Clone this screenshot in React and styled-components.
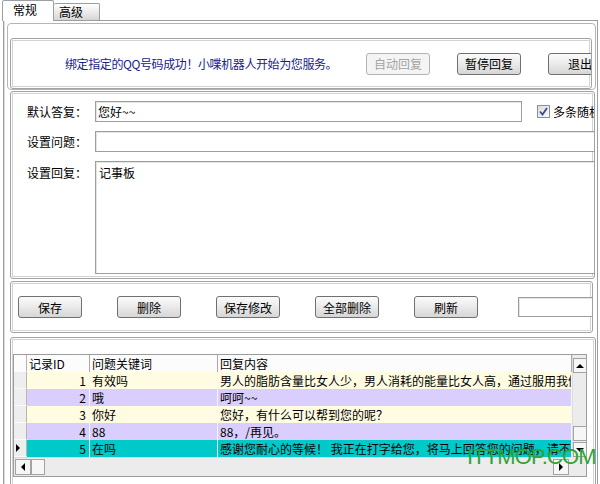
import React from "react";
import styled, { createGlobalStyle, css } from "styled-components";

const Global = createGlobalStyle`
  html, body { margin: 0; padding: 0; background: #fff; }
  body {
    font-family: "Noto Sans CJK SC", "Noto Sans", sans-serif;
    font-size: 12px;
    color: #000;
  }
  * { box-sizing: border-box; }
`;

const Root = styled.div`
  position: relative;
  width: 600px;
  height: 484px;
  overflow: hidden;
  background: #fff;
`;

const TabStrip = styled.div`
  position: relative;
  z-index: 1;
  display: flex;
  align-items: flex-end;
  height: 20px;
  padding-left: 2px;
`;

const Tab = styled.div`
  display: flex;
  align-items: center;
  border: 1px solid #9aa0a2;
  border-bottom: none;
  border-radius: 2px 2px 0 0;
  font-size: 12px;
  line-height: 1;
  ${(p) =>
    p.$active
      ? css`
          width: 52px;
          height: 21px;
          margin-bottom: -1px;
          background: #fff;
          padding: 0 0 3px 10px;
        `
      : css`
          width: 46px;
          height: 17px;
          border-left: none;
          background: linear-gradient(#ffffff, #d6d6d6);
          padding: 0 0 1px 5px;
        `}
`;

const TabPage = styled.div`
  width: 595px;
  height: 464px;
  margin-left: 3px;
  border: 1px solid #9aa0a2;
  border-bottom: none;
  box-shadow: inset 1px 0 0 #dcdcdc;
  padding: 2px 0 0 3px;
`;

const TopFrame = styled.div`
  width: 589px;
  height: 67px;
  border: 1px solid #b4b4b4;
  border-radius: 4px;
  padding: 14px 0 0 2px;
`;

const Group = styled.div`
  border: 1px solid #a2a2a2;
  border-radius: 3px;
  box-shadow: inset 0 0 0 1px #fff, inset 0 0 0 2px #d2d2d2;
  overflow: hidden;
  width: ${(p) => p.$w}px;
  height: ${(p) => p.$h}px;
  margin-top: ${(p) => p.$mt || 0}px;
  margin-left: ${(p) => p.$ml || 0}px;
`;

const StatusGroup = styled(Group)`
  display: flex;
  align-items: center;
  padding-left: 54px;
`;

const StatusText = styled.div`
  flex: none;
  width: 301px;
  color: #1c2088;
  font-size: 12px;
  letter-spacing: -0.4px;
  white-space: nowrap;
`;

const Button = styled.div`
  flex: none;
  width: 64px;
  height: 22px;
  display: flex;
  align-items: center;
  justify-content: center;
  font-size: 12px;
  border: 1px solid #707070;
  border-radius: 3px;
  background: linear-gradient(#fbfbfb 0%, #eaeaea 50%, #d6d6d6 100%);
  color: #000;
  margin-left: ${(p) => p.$ml || 0}px;
  ${(p) =>
    p.$disabled &&
    css`
      border-color: #b3b3b3;
      background: #f4f4f4;
      color: #a3a3a3;
    `}
`;

const FormGroup = styled(Group)`
  display: flex;
  flex-direction: column;
  gap: 9px;
  padding: 9px 0 0 16px;
`;

const FormRow = styled.div`
  display: flex;
  align-items: ${(p) => (p.$top ? "flex-start" : "center")};
  flex: none;
`;

const Label = styled.div`
  width: 68px;
  flex: none;
  white-space: nowrap;
  padding-top: ${(p) => (p.$top ? 3 : 0)}px;
`;

const Field = styled.div`
  flex: none;
  width: ${(p) => p.$w}px;
  height: ${(p) => p.$h || 21}px;
  border: 1px solid #9e9e9e;
  box-shadow: inset 1px 1px 0 #e4e4e4;
  background: #fff;
  padding: ${(p) => (p.$multi ? "2px 3px" : "0 2px")};
  display: flex;
  align-items: ${(p) => (p.$multi ? "flex-start" : "center")};
  white-space: nowrap;
  margin-left: ${(p) => p.$ml || 0}px;
`;

const CheckWrap = styled.div`
  display: flex;
  align-items: center;
  gap: 3px;
  margin-left: 15px;
  flex: none;
  white-space: nowrap;
  font-size: 12px;
`;

const CheckBox = styled.div`
  width: 13px;
  height: 13px;
  border: 1px solid #8e8f8f;
  background: linear-gradient(135deg, #dcdcdc, #fafafa);
  display: flex;
  align-items: center;
  justify-content: center;
`;

const ButtonGroup = styled(Group)`
  display: flex;
  align-items: center;
  gap: 35px;
  padding-left: 7px;
`;

const GridGroup = styled(Group)`
  padding: 16px 0 0 2px;
`;

const Grid = styled.div`
  width: 574px;
  height: 123px;
  border: 1px solid #9c9c9c;
  display: grid;
  grid-template-columns: 1fr 14px;
  grid-template-rows: 102px 18px;
  background: #ececec;
`;

const Body = styled.div`
  overflow: hidden;
  display: flex;
  flex-direction: column;
  background: #fff;
`;

const Row = styled.div`
  display: grid;
  grid-template-columns: 13px 63px 128px 1fr;
  height: 17px;
  flex: none;
`;

const rowBg = { odd: "#fffce2", even: "#d9cefd", sel: "#00c9c9", head: "#fcfcfc" };

const Cell = styled.div`
  height: 17px;
  line-height: 17px;
  white-space: nowrap;
  overflow: hidden;
  padding: 0 2px;
  font-size: 12px;
  background: ${(p) => rowBg[p.$kind]};
  border-right: 1px solid ${(p) => (p.$kind === "head" ? "#a9a9a9" : "#f6f6f6")};
  text-align: ${(p) => (p.$right ? "right" : "left")};
  padding-right: ${(p) => (p.$right ? 3 : 2)}px;
`;

const Indicator = styled.div`
  height: 17px;
  background: ${(p) => (p.$head ? "#fcfcfc" : "#eeeeee")};
  border-right: 1px solid #b5b5b5;
  border-bottom: 1px solid ${(p) => (p.$head ? "#fcfcfc" : "#fafafa")};
  display: flex;
  align-items: center;
  padding-left: 1px;
`;

const VScroll = styled.div`
  display: flex;
  flex-direction: column;
  background: #ececec;
  border-left: 1px solid #dcdcdc;
`;

const ScrollBtn = styled.div`
  flex: none;
  width: ${(p) => p.$w || 14}px;
  height: ${(p) => p.$h || 15}px;
  border: 1px solid #a3a3a3;
  background: #f6f6f6;
  display: flex;
  align-items: center;
  justify-content: center;
  margin-top: ${(p) => p.$mt || 0}px;
`;

const Spacer = styled.div`
  flex: 1;
`;

const HScroll = styled.div`
  display: flex;
  align-items: center;
  padding-left: 1px;
  background: #ececec;
  border-top: 1px solid #dcdcdc;
`;

const Corner = styled.div`
  background: #ececec;
`;

const Watermark = styled.div`
  position: absolute;
  left: 467px;
  top: 444px;
  font-family: "Liberation Sans", Arial, sans-serif;
  font-size: 22px;
  letter-spacing: -0.9px;
  color: #33a235;
  white-space: nowrap;
  pointer-events: none;
`;

const Tri = ({ dir }) => {
  const pts = {
    up: "0,5 4,1 8,5",
    down: "0,1 4,5 8,1",
    left: "5,0 1,4 5,8",
    right: "1,0 5,4 1,8",
  }[dir];
  const vertical = dir === "up" || dir === "down";
  return (
    <svg width={vertical ? 8 : 6} height={vertical ? 6 : 8} viewBox={vertical ? "0 0 8 6" : "0 0 6 8"}>
      <polygon points={pts} fill="#000" />
    </svg>
  );
};

const rows = [
  { id: 1, key: "有效吗", text: "男人的脂肪含量比女人少，男人消耗的能量比女人高，通过服用我们的产品", kind: "odd" },
  { id: 2, key: "哦", text: "呵呵~~", kind: "even" },
  { id: 3, key: "你好", text: "您好，有什么可以帮到您的呢？", kind: "odd" },
  { id: 4, key: "88", text: "88，/再见。", kind: "even" },
  { id: 5, key: "在吗", text: "感谢您耐心的等候！ 我正在打字给您，将马上回答您的问题，请不要走开。", kind: "sel" },
];

export default function App() {
  return (
    <Root>
      <Global />
      <TabStrip>
        <Tab $active>常规</Tab>
        <Tab>高级</Tab>
      </TabStrip>
      <TabPage>
        <TopFrame>
          <StatusGroup $w={582} $h={51}>
            <StatusText>绑定指定的QQ号码成功！小喋机器人开始为您服务。</StatusText>
            <Button $disabled>自动回复</Button>
            <Button $ml={27}>暂停回复</Button>
            <Button $ml={27}>退出</Button>
          </StatusGroup>
        </TopFrame>

        <FormGroup $w={585} $h={188} $mt={1} $ml={3}>
          <FormRow>
            <Label>默认答复：</Label>
            <Field $w={427}>您好~~</Field>
            <CheckWrap>
              <CheckBox>
                <svg width="9" height="9" viewBox="0 0 9 9">
                  <path d="M1 4.5 L3.5 7.5 L8 1" stroke="#3c4a8a" strokeWidth="1.8" fill="none" />
                </svg>
              </CheckBox>
              多条随机回复
            </CheckWrap>
          </FormRow>
          <FormRow>
            <Label>设置问题：</Label>
            <Field $w={520} />
          </FormRow>
          <FormRow $top>
            <Label $top>设置回复：</Label>
            <Field $w={520} $h={113} $multi>记事板</Field>
          </FormRow>
        </FormGroup>

        <ButtonGroup $w={583} $h={52} $mt={2} $ml={3}>
          <Button>保存</Button>
          <Button>删除</Button>
          <Button>保存修改</Button>
          <Button>全部删除</Button>
          <Button>刷新</Button>
          <Field $w={100} $h={20} $ml={5} />
        </ButtonGroup>

        <GridGroup $w={586} $h={150} $mt={4} $ml={3}>
          <Grid>
            <Body>
              <Row>
                <Indicator $head />
                <Cell $kind="head">记录ID</Cell>
                <Cell $kind="head">问题关键词</Cell>
                <Cell $kind="head">回复内容</Cell>
              </Row>
              {rows.map((r) => (
                <Row key={r.id}>
                  <Indicator>{r.kind === "sel" && <Tri dir="right" />}</Indicator>
                  <Cell $kind={r.kind} $right>{r.id}</Cell>
                  <Cell $kind={r.kind}>{r.key}</Cell>
                  <Cell $kind={r.kind}>{r.text}</Cell>
                </Row>
              ))}
            </Body>
            <VScroll>
              <ScrollBtn $mt={3}><Tri dir="up" /></ScrollBtn>
              <Spacer />
              <ScrollBtn $h={15} />
              <ScrollBtn $mt={1}><Tri dir="down" /></ScrollBtn>
            </VScroll>
            <HScroll>
              <ScrollBtn $w={16} $h={16}><Tri dir="left" /></ScrollBtn>
              <ScrollBtn $w={14} $h={16} />
              <Spacer />
              <ScrollBtn $w={16} $h={16}><Tri dir="right" /></ScrollBtn>
              <Corner style={{ width: 3 }} />
            </HScroll>
            <Corner />
          </Grid>
        </GridGroup>
      </TabPage>
      <Watermark>ITTMOP.COM</Watermark>
    </Root>
  );
}
